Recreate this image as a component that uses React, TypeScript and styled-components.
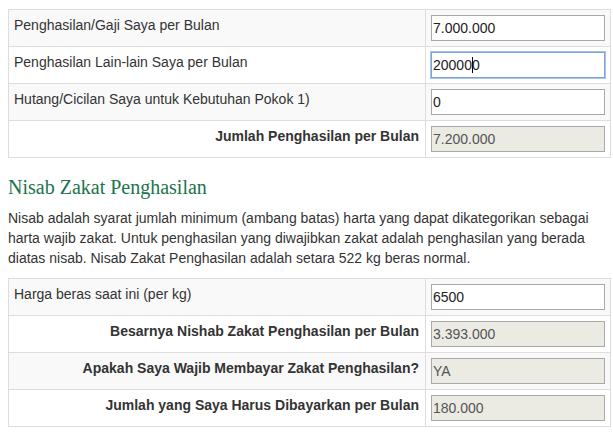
import React from "react";
import styled, { createGlobalStyle } from "styled-components";

const GlobalStyle = createGlobalStyle`
  html, body { margin: 0; padding: 0; background: #fff; }
  body { font-family: "Liberation Sans", Arial, sans-serif; font-size: 14px; color: #333; }
`;

const Page = styled.div`
  padding: 9px 2px 0 8px;
  width: 603px;
`;

const Table = styled.table`
  width: 603px;
  border-collapse: collapse;
  table-layout: fixed;
  border: 1px solid #ddd;
`;

const Row = styled.tr`
  &:nth-child(odd) { background: #f9f9f9; }
  &:nth-child(even) { background: #fff; }
`;

const LabelCell = styled.td<{ $bold?: boolean }>`
  width: 405px;
  border: 1px solid #ddd;
  padding: 5px 6px 5px 5px;
  vertical-align: top;
  line-height: 20px;
  font-size: 14px;
  color: #333;
  text-align: ${(p) => (p.$bold ? "right" : "left")};
  font-weight: ${(p) => (p.$bold ? "bold" : "normal")};
`;

const InputCell = styled.td`
  border: 1px solid #ddd;
  padding: 5px;
  vertical-align: top;
`;

const Field = styled.div<{ $readonly?: boolean; $focused?: boolean }>`
  box-sizing: border-box;
  height: 26px;
  width: 100%;
  padding: 0 2px 0 1px;
  display: flex;
  align-items: center;
  font-family: "Liberation Sans", Arial, sans-serif;
  font-size: 14px;
  color: ${(p) => (p.$readonly ? "#545454" : "#222")};
  background: ${(p) => (p.$readonly ? "#ebebe4" : "#fff")};
  border: 1px solid ${(p) => (p.$focused ? "#7aa3d8" : "#a9a9a9")};
  box-shadow: ${(p) => (p.$focused ? "0 0 0 1px #a9c4ea" : "none")};
  white-space: pre;
`;

const Caret = styled.span`
  display: inline-block;
  width: 1px;
  height: 16px;
  background: #000;
  margin-right: -1px;
`;

const Heading = styled.h2`
  margin: 18px 0 10px;
  font-family: "Liberation Serif", "Times New Roman", serif;
  font-weight: normal;
  font-size: 20px;
  line-height: 22px;
  color: #1b744b;
`;

const Paragraph = styled.p`
  margin: 0 0 10px;
  font-size: 14px;
  line-height: 20px;
  color: #333;
`;

type Item = { label: string; bold?: boolean; value: React.ReactNode; readonly?: boolean; focused?: boolean };

const FormTable = ({ items }: { items: Item[] }) => (
  <Table>
    <tbody>
      {items.map((it, i) => (
        <Row key={i}>
          <LabelCell $bold={it.bold}>{it.label}</LabelCell>
          <InputCell>
            <Field $readonly={it.readonly} $focused={it.focused}>
              {it.value}
            </Field>
          </InputCell>
        </Row>
      ))}
    </tbody>
  </Table>
);

export default function App() {
  const income: Item[] = [
    { label: "Penghasilan/Gaji Saya per Bulan", value: "7.000.000" },
    {
      label: "Penghasilan Lain-lain Saya per Bulan",
      value: (
        <>
          20000
          <Caret />
          0
        </>
      ),
      focused: true,
    },
    { label: "Hutang/Cicilan Saya untuk Kebutuhan Pokok 1)", value: "0" },
    { label: "Jumlah Penghasilan per Bulan", bold: true, value: "7.200.000", readonly: true },
  ];
  const nisab: Item[] = [
    { label: "Harga beras saat ini (per kg)", value: "6500" },
    { label: "Besarnya Nishab Zakat Penghasilan per Bulan", bold: true, value: "3.393.000", readonly: true },
    { label: "Apakah Saya Wajib Membayar Zakat Penghasilan?", bold: true, value: "YA", readonly: true },
    { label: "Jumlah yang Saya Harus Dibayarkan per Bulan", bold: true, value: "180.000", readonly: true },
  ];
  return (
    <>
      <GlobalStyle />
      <Page>
        <FormTable items={income} />
        <Heading>Nisab Zakat Penghasilan</Heading>
        <Paragraph>
          Nisab adalah syarat jumlah minimum (ambang batas) harta yang dapat dikategorikan sebagai harta wajib
          zakat. Untuk penghasilan yang diwajibkan zakat adalah penghasilan yang berada diatas nisab. Nisab
          Zakat Penghasilan adalah setara 522 kg beras normal.
        </Paragraph>
        <FormTable items={nisab} />
      </Page>
    </>
  );
}
